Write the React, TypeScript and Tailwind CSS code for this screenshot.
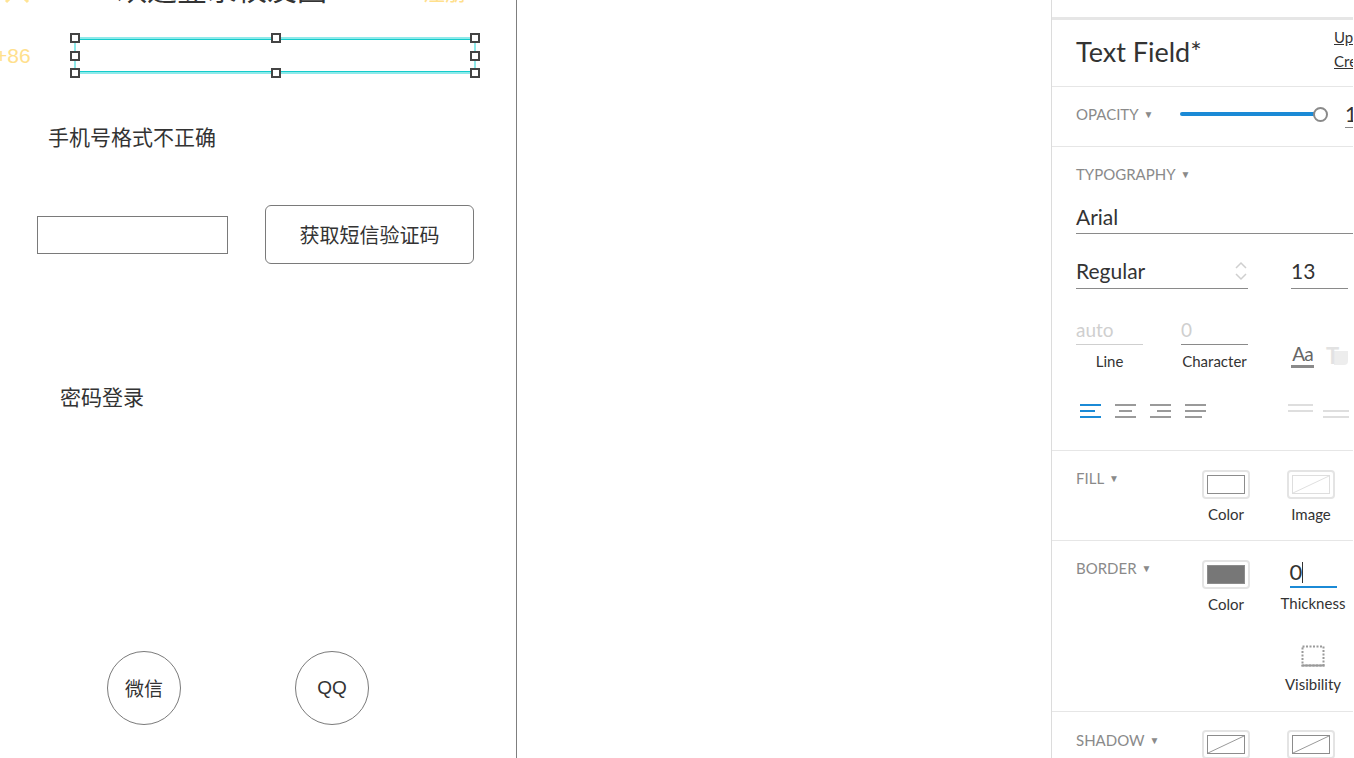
import React from "react";

const cjk = { fontFamily: '"Noto Sans CJK SC", "Liberation Sans", sans-serif' };
const ui = { fontFamily: 'Lato, "Open Sans", sans-serif' };

const Handle = ({ cls }: { cls: string }) => (
    <span className={`absolute w-[10px] h-[10px] bg-white border-2 border-[#444] ${cls}`} />
);

const SectionLabel = ({ text }: { text: string }) => (
    <div className="flex items-center gap-[5px] text-[15px] leading-[20px] text-[#8a8a8a] uppercase">
        <span>{text}</span>
        <span className="text-[10px]">▼</span>
    </div>
);

const Swatch = ({ kind }: { kind: "white" | "image" | "solid" | "shadow" }) => (
    <div className="w-[48px] h-[29px] rounded-[4px] border-2 border-[#e4e4e4] p-[3px]">
        {kind === "white" && <div className="w-full h-full border border-[#8c8c8c] bg-white" />}
        {kind === "solid" && <div className="w-full h-full border border-[#8c8c8c] bg-[#777777]" />}
        {(kind === "image" || kind === "shadow") && (
            <svg width="38" height="19" viewBox="0 0 38 19" className="block">
                <rect x="0.5" y="0.5" width="37" height="18" fill="white"
                      stroke={kind === "image" ? "#dedede" : "#8c8c8c"} />
                <line x1="1" y1="18" x2="37" y2="1" stroke={kind === "image" ? "#e0e0e0" : "#9a9a9a"} />
            </svg>
        )}
    </div>
);

const AlignIcon = ({ mode, color }: { mode: "left" | "center" | "right" | "justify"; color: string }) => {
    const mid = mode === "left" ? [0, 15] : mode === "center" ? [4, 17] : mode === "right" ? [7, 21] : [0, 21];
    const bot = mode === "justify" ? [0, 17] : [0, 21];
    return (
        <svg width="21" height="14" viewBox="0 0 21 14">
            <rect x="0" y="0" width="21" height="2" fill={color} />
            <rect x={mid[0]} y="6" width={mid[1] - mid[0]} height="2" fill={color} />
            <rect x={bot[0]} y="12" width={bot[1] - bot[0]} height="2" fill={color} />
        </svg>
    );
};

const LeftPanel = () => (
    <div className="w-[517px] h-full shrink-0 border-r border-[#7f7f7f] overflow-hidden text-[#333]" style={cjk}>
        {/* header row, mostly scrolled out of view */}
        <div className="flex items-center h-[32px] mt-[-29px]">
            <svg width="30" height="30" viewBox="0 0 30 30" className="ml-[1px] mt-[6px]">
                <path d="M5 5 L27 27 M27 5 L5 27" stroke="#ffe495" strokeWidth="3" fill="none" />
            </svg>
            <span className="ml-[86px] text-[30px] leading-[32px] text-[#333]">欢迎登录校友圈</span>
            <span className="ml-[96px] mt-[6px] text-[22px] leading-[32px] text-[#ffe08c]">注册</span>
        </div>

        <div className="flex items-center mt-[34px] h-[37px]">
            <span className="w-[79px] shrink-0 -ml-[5px] text-[21px] text-[#ffe08c]" style={{ fontFamily: '"Liberation Sans", sans-serif' }}>
                +86
            </span>
            <div className="relative w-[402px] h-[37px] border-2 border-[#8eeaea]">
                <div className="absolute inset-0 border-t border-b border-[#14cccc]" />
                <Handle cls="-left-[6px] -top-[6px]" />
                <Handle cls="left-[195px] -top-[6px]" />
                <Handle cls="-right-[6px] -top-[6px]" />
                <Handle cls="-left-[6px] top-[12px]" />
                <Handle cls="-right-[6px] top-[12px]" />
                <Handle cls="-left-[6px] -bottom-[6px]" />
                <Handle cls="left-[195px] -bottom-[6px]" />
                <Handle cls="-right-[6px] -bottom-[6px]" />
            </div>
        </div>

        <p className="mt-[48px] pl-[48px] text-[21px] leading-[28px]">手机号格式不正确</p>

        <div className="flex items-center mt-[55px] pl-[37px] gap-[37px]">
            <div className="w-[191px] h-[38px] border border-[#7a7a7a]" />
            <button className="w-[209px] h-[59px] rounded-[6px] border border-[#7a7a7a] text-[20px] text-[#333]">
                获取短信验证码
            </button>
        </div>

        <p className="mt-[118px] pl-[60px] text-[21px] leading-[28px]">密码登录</p>

        <div className="flex mt-[241px] pl-[107px] gap-[114px]">
            <div className="w-[74px] h-[74px] rounded-full border border-[#7a7a7a] flex items-center justify-center text-[19px]">
                微信
            </div>
            <div className="w-[74px] h-[74px] rounded-full border border-[#7a7a7a] flex items-center justify-center text-[19px]"
                 style={{ fontFamily: '"Liberation Sans", sans-serif' }}>
                QQ
            </div>
        </div>
    </div>
);

const RightPanel = () => (
    <div className="w-[302px] h-full shrink-0 border-l border-[#dcdcdc] overflow-hidden text-[#333]" style={ui}>
        <div className="w-[330px]">
            <div className="h-[20px] border-b-[3px] border-[#e6e6e6]" />

            <div className="h-[67px] border-b border-[#e6e6e6] flex items-center pl-[24px] pb-[2px] relative">
                <span className="text-[27px] leading-[32px] text-[#333]">Text Field*</span>
                <div className="absolute left-[282px] top-[8px] flex flex-col gap-[6px] text-[15px] leading-[18px] underline text-[#333]">
                    <span>Update</span>
                    <span>Create</span>
                </div>
            </div>

            <div className="h-[60px] border-b border-[#e6e6e6] flex items-center pl-[24px] pb-[5px]">
                <div className="w-[104px]"><SectionLabel text="Opacity" /></div>
                <div className="relative w-[148px] h-[16px] flex items-center">
                    <div className="w-[138px] h-[4px] rounded-full bg-[#1b8ad6]" />
                    <div className="w-[15px] h-[15px] -ml-[4px] rounded-full border-2 border-[#8a8a8a] bg-white" />
                </div>
                <div className="ml-[17px] text-[21px] leading-[26px] border-b border-[#888]">100</div>
            </div>

            <div className="h-[304px] border-b border-[#e6e6e6] pl-[24px] pt-[17px]">
                <SectionLabel text="Typography" />
                <div className="mt-[16px] h-[34px] w-[290px] border-b border-[#8a8a8a] flex items-center text-[21px]">
                    Arial
                </div>
                <div className="flex mt-[20px]">
                    <div className="w-[172px] h-[35px] border-b border-[#8a8a8a] flex items-center justify-between text-[21px]">
                        <span>Regular</span>
                        <svg width="12" height="20" viewBox="0 0 12 20" className="mr-[1px]">
                            <path d="M1 7 L6 2 L11 7 M1 13 L6 18 L11 13" stroke="#cfcfcf" strokeWidth="1.5" fill="none" />
                        </svg>
                    </div>
                    <div className="ml-[43px] w-[57px] h-[35px] border-b border-[#8a8a8a] flex items-center text-[21px]">13</div>
                </div>
                <div className="flex mt-[28px]">
                    <div className="flex flex-col w-[67px]">
                        <div className="h-[28px] border-b border-[#cfcfcf] flex items-center text-[19px] text-[#cfcfcf]">auto</div>
                        <div className="mt-[7px] text-center text-[15px] leading-[18px]">Line</div>
                    </div>
                    <div className="flex flex-col w-[67px] ml-[38px]">
                        <div className="h-[28px] border-b border-[#8a8a8a] flex items-center text-[19px] text-[#cfcfcf]">0</div>
                        <div className="mt-[7px] text-center text-[15px] leading-[18px] whitespace-nowrap -mx-[10px]">Character</div>
                    </div>
                    <div className="ml-[43px] flex items-start gap-[12px] pt-[28px]">
                        <div className="flex flex-col items-center">
                            <span className="text-[19px] leading-[18px] text-[#666] tracking-[-1px]">Aa</span>
                            <span className="w-[23px] h-[3px] bg-[#8a8a8a] mt-[2px]" />
                        </div>
                        <div className="relative w-[24px] h-[22px]">
                            <span className="absolute left-[8px] top-[6px] w-[14px] h-[14px] rounded-br-[4px] bg-[#ededed]" />
                            <span className="absolute left-0 top-0 text-[22px] leading-[22px] font-bold text-[#e2e2e2]">T</span>
                        </div>
                    </div>
                </div>
                <div className="flex items-center mt-[34px]">
                    <div className="flex gap-[14px] ml-[4px]">
                        <AlignIcon mode="left" color="#1b8ad6" />
                        <AlignIcon mode="center" color="#9a9a9a" />
                        <AlignIcon mode="right" color="#9a9a9a" />
                        <AlignIcon mode="justify" color="#9a9a9a" />
                    </div>
                    <div className="flex gap-[10px] ml-[82px]">
                        <svg width="25" height="14" viewBox="0 0 25 14">
                            <rect x="0" y="0" width="25" height="2" fill="#dedede" />
                            <rect x="0" y="6" width="25" height="2" fill="#dedede" />
                        </svg>
                        <svg width="26" height="14" viewBox="0 0 26 14">
                            <rect x="0" y="6" width="26" height="2" fill="#dedede" />
                            <rect x="0" y="12" width="26" height="2" fill="#dedede" />
                        </svg>
                    </div>
                </div>
            </div>

            <div className="h-[90px] border-b border-[#e6e6e6] pl-[24px] pt-[17px] flex items-start">
                <div className="w-[126px]"><SectionLabel text="Fill" /></div>
                <div className="flex flex-col items-center mt-[2px]">
                    <Swatch kind="white" />
                    <span className="mt-[6px] text-[15px] leading-[18px]">Color</span>
                </div>
                <div className="flex flex-col items-center mt-[2px] ml-[37px]">
                    <Swatch kind="image" />
                    <span className="mt-[6px] text-[15px] leading-[18px]">Image</span>
                </div>
            </div>

            <div className="h-[171px] border-b border-[#e6e6e6] pl-[24px] pt-[17px] flex items-start">
                <div className="w-[126px]"><SectionLabel text="Border" /></div>
                <div className="flex flex-col items-center mt-[2px]">
                    <Swatch kind="solid" />
                    <span className="mt-[6px] text-[15px] leading-[18px]">Color</span>
                </div>
                <div className="flex flex-col items-center ml-[30px] w-[66px]">
                    <div className="w-[47px] h-[30px] border-b-2 border-[#1b8ad6] flex items-center text-[22px] leading-[24px]">
                        <span>0</span>
                        <span className="w-px h-[21px] bg-[#333]" />
                    </div>
                    <span className="mt-[6px] text-[15px] leading-[18px]">Thickness</span>
                    <svg width="24" height="22" viewBox="0 0 24 22" className="mt-[33px]">
                        <rect x="1.5" y="1.5" width="21" height="19" fill="none" stroke="#9a9a9a" strokeWidth="2" strokeDasharray="2 1.5" />
                        <line x1="0.5" y1="20.5" x2="23.5" y2="20.5" stroke="#9a9a9a" strokeWidth="2" />
                    </svg>
                    <span className="mt-[8px] text-[15px] leading-[18px]">Visibility</span>
                </div>
            </div>

            <div className="pl-[24px] pt-[18px] flex items-start">
                <div className="w-[126px]"><SectionLabel text="Shadow" /></div>
                <Swatch kind="shadow" />
                <div className="ml-[37px]"><Swatch kind="shadow" /></div>
            </div>
        </div>
    </div>
);

export default function App() {
    return (
        <div className="w-[1354px] h-[758px] flex bg-white overflow-hidden">
            <LeftPanel />
            <div className="w-[534px] h-full shrink-0 bg-white" />
            <RightPanel />
        </div>
    );
}
